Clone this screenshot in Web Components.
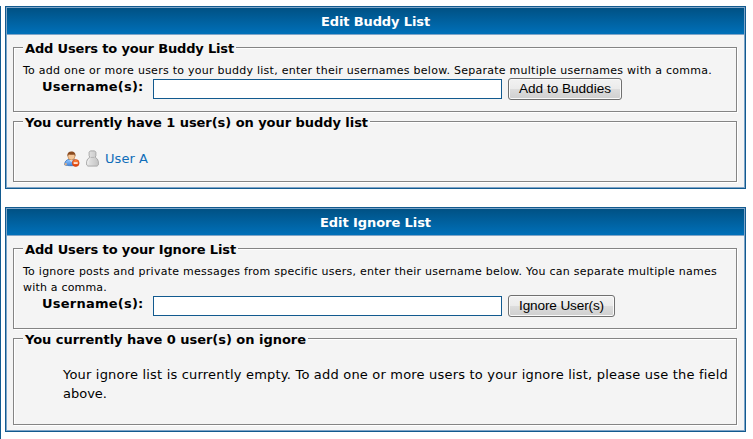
<!DOCTYPE html>
<html lang="en"><head><meta charset="utf-8"><title>Buddy and Ignore Lists</title>
<style>
body{margin:0;background:#fff;color:#000;font:13px/16px "DejaVu Sans",Verdana,sans-serif}
</style></head><body>
<list-page></list-page>
<script>
const define=(name,html,setup)=>customElements.define(name,class extends HTMLElement{
  connectedCallback(){
    if(this.shadowRoot)return;
    this.attachShadow({mode:'open'}).innerHTML=html;
    if(setup)setup(this,this.shadowRoot);
  }
});

/* A single line whose tracking is adjusted to fill the given width. */
define('text-line',`<style>:host{display:block;white-space:nowrap}span{display:inline-block}</style><span><slot></slot></span>`,(el,root)=>{
  const s=root.querySelector('span'),w=+el.getAttribute('w'),n=el.textContent.length;
  el.style.width=w+'px';
  s.style.letterSpacing=(w-s.getBoundingClientRect().width)/n+'px';
});

define('list-panel',`<style>
:host{display:block;box-sizing:border-box;width:741px;border:1px solid #125a8f;background:#f4f4f4}
.in{box-sizing:border-box;height:100%;border:1px solid #7fa5c8}
header{box-sizing:border-box;height:27px;border-bottom:1px solid #7fa5c8;background:linear-gradient(#005184,#0070b9);color:#fff;font-weight:bold;display:flex;justify-content:center;padding-top:6px}
.body{display:flex;flex-direction:column;gap:9px;padding:12px 6px 0}
</style><div class="in"><header><slot name="title"></slot></header><div class="body"><slot></slot></div></div>`);

define('group-box',`<style>
:host{display:block;box-sizing:border-box;width:724px;border:1px solid #848484;box-shadow:1px 1px #fff,inset 1px 1px #fff;padding-left:9px}
.legend{width:max-content;margin-top:-7px;padding:0 2px;height:16px;background:#f4f4f4;font-weight:bold}
</style><div class="legend"><slot name="legend"></slot></div><slot></slot>`);

define('name-form',`<style>
:host{display:flex;height:22px;padding-left:19px}
.label{width:111px;font-weight:bold;margin-top:1px}
input{box-sizing:border-box;width:349px;height:20px;margin:1px 6px 0 0;border:1px solid #125a8f;background:#fff;padding:1px 3px;outline:0}
button{box-sizing:border-box;height:22px;margin:0;padding:0 0 0 10px;border:1px solid #707070;border-radius:3px;box-shadow:inset 0 0 0 1px #fafafa;background:linear-gradient(#f2f2f2,#ebebeb 49%,#dddddd 50%,#cfcfcf);color:#000;font:13.6px/20px "Liberation Sans",Arial,sans-serif;text-align:left}
</style><div class="label"><text-line w="101.5">Username(s):</text-line></div><input type="text" aria-label="Usernames"><button type="button"><slot></slot></button>`,(el,root)=>{
  root.querySelector('button').style.width=el.getAttribute('button-width')+'px';
});

define('remove-user-icon',`<style>:host,svg{display:block;width:16px;height:16px}</style>
<svg viewBox="0 0 16 16"><defs>
<linearGradient id="b" x2="0" y2="1"><stop stop-color="#9accff"/><stop offset="1" stop-color="#3f83dc"/></linearGradient>
<linearGradient id="r" x2="0" y2="1"><stop stop-color="#ff8d43"/><stop offset="1" stop-color="#df3c08"/></linearGradient></defs>
<path d="M.6 13.8C.6 10.8 2.2 8.7 5 8.4h4.5c2.5.4 3.5 2 3.5 5.4-2 1.2-9.8 1.2-12.4 0z" fill="url(#b)" stroke="#3471bc" stroke-width=".8"/>
<path d="M.7 12.2h2v2H.7z" fill="#e9ae78"/><path d="M5.5 8.5 7.2 11 9 8.5z" fill="#eef6ff"/>
<ellipse cx="7.4" cy="5.2" rx="3.5" ry="3.8" fill="#f5c799" stroke="#b87940" stroke-width=".6"/>
<path d="M3.4 5.5C3 2.3 4.6.5 7.4.5s4.5 1.8 4 5l-1-1.9c-2 .4-4 .3-5.7 0z" fill="#8a4b20"/>
<circle cx="11.7" cy="12" r="3.4" fill="url(#r)" stroke="#cd3f10" stroke-width=".7"/><path d="M9.7 11.3h4v1.5h-4z" fill="#fff"/></svg>`);

define('offline-icon',`<style>:host,svg{display:block;width:13px;height:17px}</style>
<svg viewBox="0 0 13 17"><defs><linearGradient id="g"><stop stop-color="#e8e8e8"/><stop offset="1" stop-color="#c4c4c4"/></linearGradient></defs>
<path d="M4.3.9h4.4l1.2 1.3v3.5L9.2 7.2l2.2 1.9 1 2.5v3.3l-1.3 1.2H1.9L.6 14.9v-3.3l1-2.5 2.2-1.9-.7-1.5V2.2z" fill="url(#g)" stroke="#a4a4a4" stroke-width=".9"/>
<path d="M4.7 7.4h3.6" stroke="#b4b4b4"/><path d="M2 14V11.5L3.5 9" stroke="#f0f0f0" fill="none"/></svg>`);

define('buddy-row',`<style>:host{display:flex;padding:20px 0 0 41px}
offline-icon{margin:-1px 6px 0 6px}a{color:#0f6db9;text-decoration:none}</style>
<remove-user-icon></remove-user-icon><offline-icon></offline-icon><a><slot></slot></a>`);

define('list-page',`<style>
:host{display:flex;box-sizing:border-box;width:753px;height:439px;padding-top:6px}
.rule{width:1px;background:#125a8f;margin-right:4px}
main{display:flex;flex-direction:column;gap:18px}
.p1{height:183px}.p2{height:225px}.a{height:65px}.b{height:61px}.c{height:81px}.d{height:87px}
.note{font-size:11px;line-height:16px;padding-top:6px}
.a name-form,.c name-form{margin-top:-1px}
.empty{padding:17px 0 0 40px;line-height:19px}
</style>
<div class="rule"></div><main>
<list-panel class="p1"><text-line slot="title" w="109">Edit Buddy List</text-line>
<group-box class="a"><text-line slot="legend" w="209">Add Users to your Buddy List</text-line>
<div class="note"><text-line w="689">To add one or more users to your buddy list, enter their usernames below. Separate multiple usernames with a comma.</text-line></div>
<name-form button-width="114"><text-line w="92">Add to Buddies</text-line></name-form></group-box>
<group-box class="b"><text-line slot="legend" w="343">You currently have 1 user(s) on your buddy list</text-line>
<buddy-row><text-line w="43">User A</text-line></buddy-row></group-box></list-panel>
<list-panel class="p2"><text-line slot="title" w="111">Edit Ignore List</text-line>
<group-box class="c"><text-line slot="legend" w="211">Add Users to your Ignore List</text-line>
<div class="note"><text-line w="694">To ignore posts and private messages from specific users, enter their username below. You can separate multiple names</text-line><text-line w="84">with a comma.</text-line></div>
<name-form button-width="107"><text-line w="85">Ignore User(s)</text-line></name-form></group-box>
<group-box class="d"><text-line slot="legend" w="281">You currently have 0 user(s) on ignore</text-line>
<div class="empty"><text-line w="665">Your ignore list is currently empty. To add one or more users to your ignore list, please use the field</text-line><text-line w="44">above.</text-line></div></group-box></list-panel>
</main>`);
</script></body></html>
